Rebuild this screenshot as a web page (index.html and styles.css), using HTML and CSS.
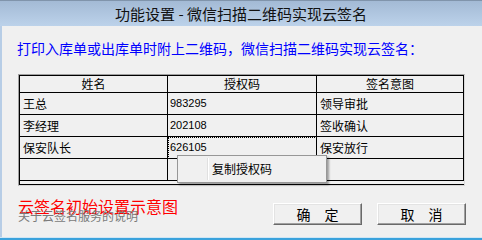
FILE: index.html
```html
<!DOCTYPE html>
<html>
<head>
<meta charset="utf-8">
<link rel="stylesheet" href="styles.css">
</head>
<body>
<div class="window">
  <div class="titlebar">功能设置 - 微信扫描二维码实现云签名</div>
  <div class="client">
    <div class="intro">打印入库单或出库单时附上二维码，微信扫描二维码实现云签名：</div>
    <div class="frame">
      <div class="grid">
        <div class="cell head">姓名</div>
        <div class="cell head">授权码</div>
        <div class="cell head">签名意图</div>
        <div class="cell">王总</div>
        <div class="cell num">983295</div>
        <div class="cell">领导审批</div>
        <div class="cell">李经理</div>
        <div class="cell num">202108</div>
        <div class="cell">签收确认</div>
        <div class="cell">保安队长</div>
        <div class="cell num focus"><span>626105</span></div>
        <div class="cell">保安放行</div>
        <div class="cell"></div>
        <div class="cell"></div>
        <div class="cell"></div>
      </div>
    </div>
    <div class="footer">
      <div class="labels">
        <div class="red">云签名初始设置示意图</div>
        <div class="gray">关于云签名服务的说明</div>
      </div>
      <div class="buttons">
        <div class="btn">确　定</div>
        <div class="btn">取　消</div>
      </div>
    </div>
  </div>
  <div class="bottomline"></div>
  <div class="menu">
    <div class="gutter"></div>
    <div class="item">复制授权码</div>
  </div>
</div>
</body>
</html>
```
FILE: styles.css
```css
html, body {
  margin: 0;
  padding: 0;
  background: #f0f0f0;
}
.window {
  position: relative;
  width: 482px;
  height: 240px;
  overflow: hidden;
  background: #f0f0f0;
  font-family: "Noto Sans CJK SC", "Noto Sans", sans-serif;
  display: flex;
  flex-direction: column;
}
.titlebar {
  height: 25px;
  border-top: 1px solid #8094ab;
  background: linear-gradient(#a3bad5, #bcd2ea);
  text-align: center;
  font-size: 15px;
  line-height: 26px;
  color: #111;
}
.client {
  flex: 1;
  border-left: 2px solid #b7cde6;
  padding: 12px 16px 0 15px;
}
.intro {
  font-size: 14px;
  line-height: 20px;
  color: #0000ff;
  white-space: nowrap;
}
.frame {
  margin: 16px 0 0 1px;
  width: 445px;
  border: 1px solid #a0a0a0;
  border-right-color: #d8d8d8;
  border-bottom-color: #d8d8d8;
}
.grid {
  display: grid;
  grid-template-columns: 148px 149px 147px;
  grid-template-rows: 17px 22px 22px 22px 22px;
  border-left: 1px solid #000;
  border-top: 1px solid #000;
  padding-bottom: 3px;
  border-bottom: 1px solid #000;
  width: 444px;
}
.cell {
  box-sizing: border-box;
  border-right: 1px solid #000;
  border-bottom: 1px solid #000;
  font-size: 12px;
  line-height: 21px;
  padding-left: 3px;
  color: #000;
  white-space: nowrap;
}
.cell.head {
  text-align: center;
  line-height: 16px;
  padding-left: 0;
}
.cell.num {
  font-family: "Liberation Sans", Arial, sans-serif;
  font-size: 11px;
  padding-left: 2px;
}
.cell.focus {
  outline: 1px dotted #000;
  outline-offset: -1px;
}
.footer {
  display: flex;
  justify-content: space-between;
  align-items: flex-start;
  margin-top: 10px;
  margin-left: 1px;
}
.labels {
  display: grid;
}
.labels > div {
  grid-area: 1 / 1;
  white-space: nowrap;
}
.red {
  font-size: 16px;
  line-height: 20px;
  color: #ff0000;
}
.gray {
  margin-top: 13px;
  font-size: 12px;
  line-height: 14px;
  color: #7a7a7a;
}
.buttons {
  display: flex;
  gap: 15px;
  margin-top: 7px;
}
.btn {
  box-sizing: border-box;
  width: 89px;
  height: 22px;
  border: 1px solid;
  border-color: #ffffff #696969 #696969 #ffffff;
  box-shadow: inset -1px -1px 0 #a0a0a0, inset 1px 1px 0 #e3e3e3;
  background: #f0f0f0;
  font-size: 14px;
  line-height: 20px;
  text-align: center;
  color: #000;
}
.bottomline {
  height: 2px;
  border-top: 1px solid #cfe6f5;
  background: #3aa2dc;
  margin-bottom: 0;
}
.menu {
  position: absolute;
  left: 177px;
  top: 155px;
  width: 148px;
  height: 26px;
  background: #f0f0f0;
  border: 1px solid #979797;
  box-shadow: 2px 2px 2px rgba(0, 0, 0, 0.35);
  display: flex;
  align-items: center;
}
.gutter {
  align-self: stretch;
  width: 29px;
  margin: 2px 0;
  border-right: 1px solid #e0e0e0;
  box-shadow: 1px 0 0 #ffffff;
}
.item {
  margin-left: 4px;
  font-size: 12px;
  line-height: 16px;
  color: #000;
}
```
